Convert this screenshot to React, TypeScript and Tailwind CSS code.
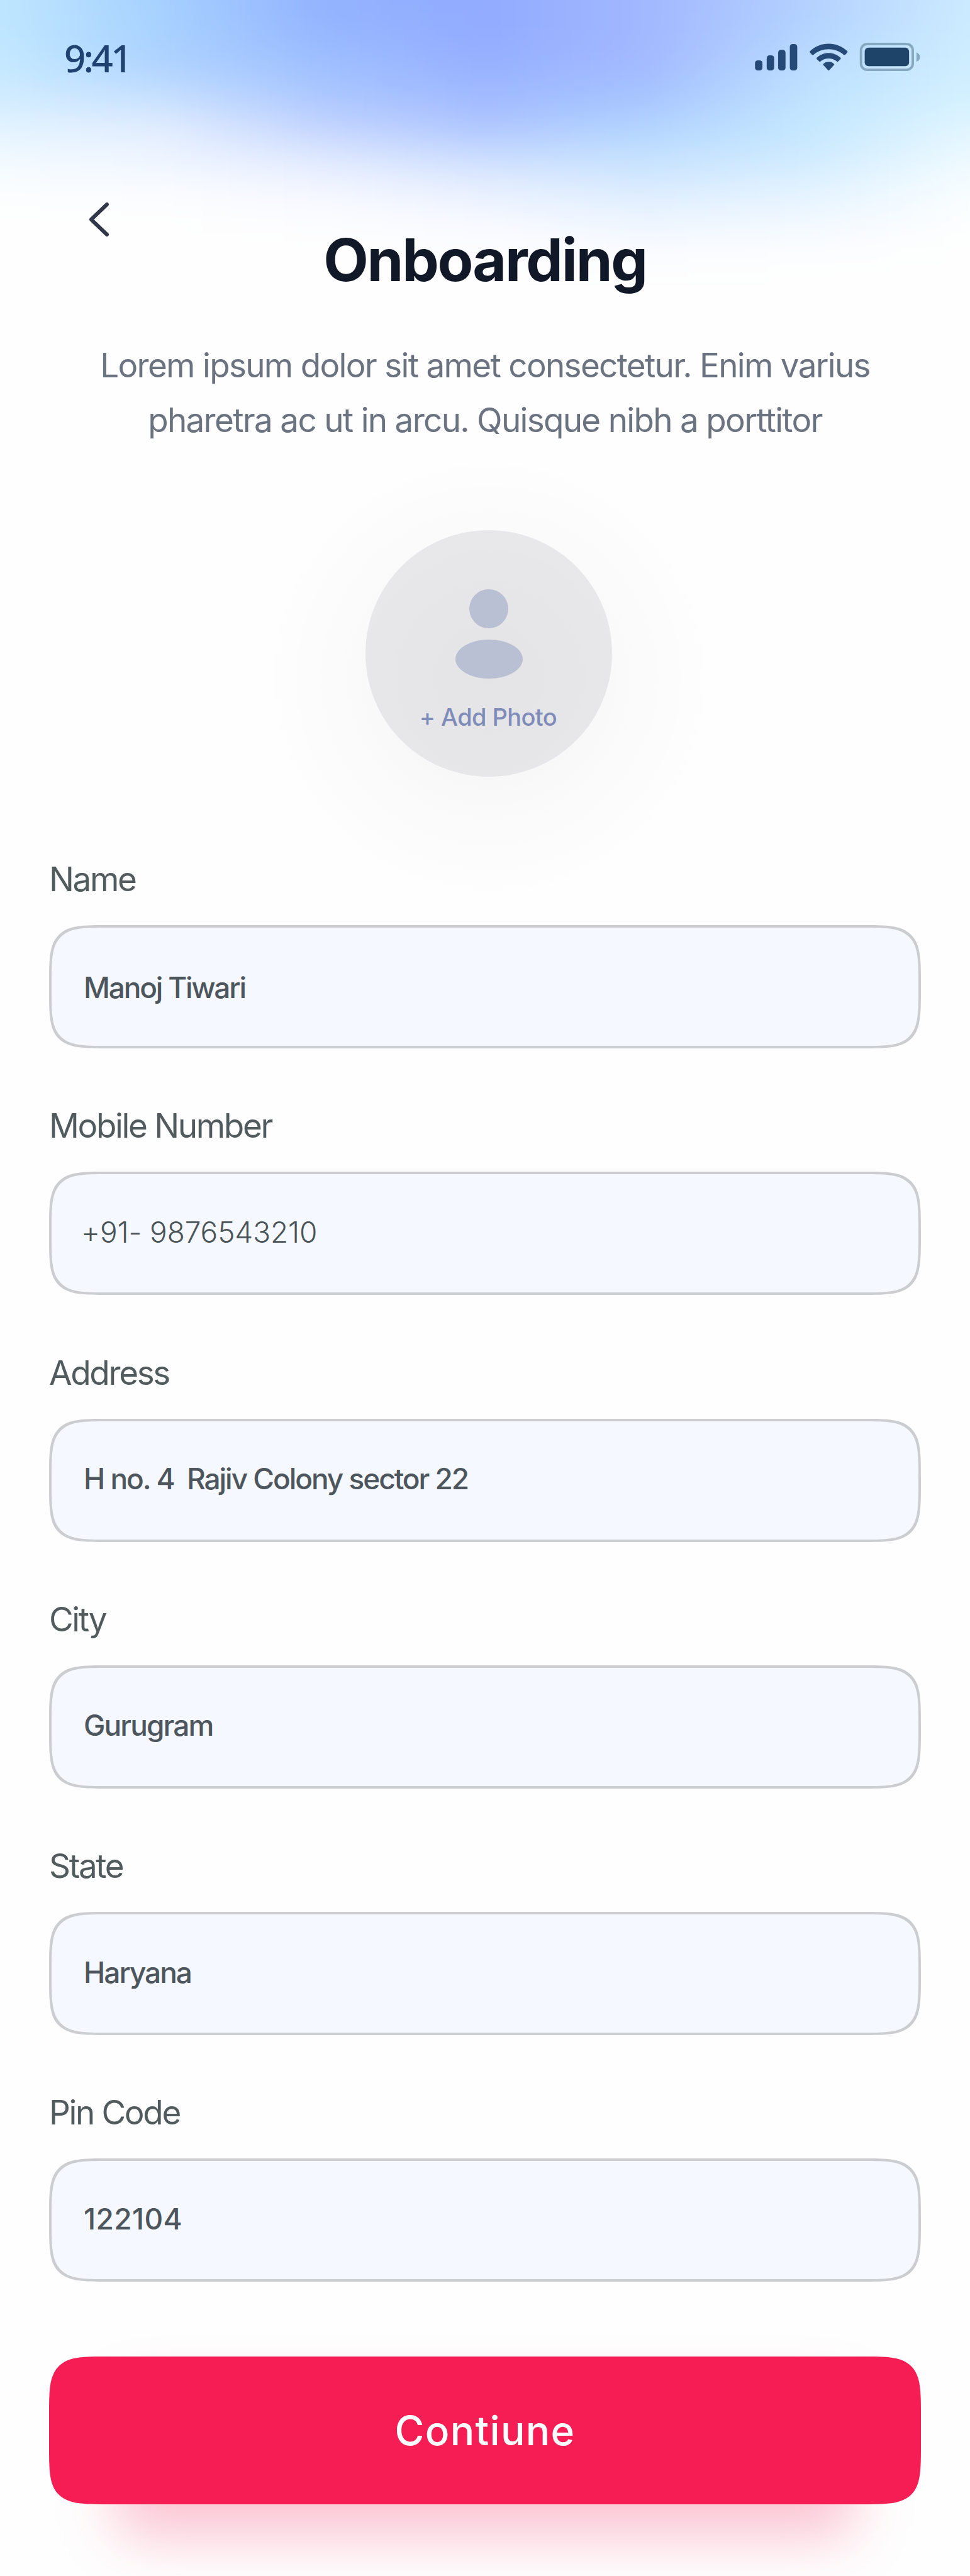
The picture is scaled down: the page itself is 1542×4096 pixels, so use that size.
const fields = [
  { label: "Name", value: "Manoj Tiwari", text: "font-medium tracking-[-2.200px] text-[#4d565c] pt-[2px]" },
  { label: "Mobile Number", value: "+91- 9876543210", text: "font-light tracking-[-0.100px] text-[#4b5457] pb-[4px] -indent-[4px]" },
  { label: "Address", value: "H no. 4  Rajiv Colony sector 22", text: "font-medium tracking-[-2.050px] text-[#4d565c] pb-[4px]" },
  { label: "City", value: "Gurugram", text: "font-medium tracking-[-1.900px] text-[#4d565c] pb-[4px]" },
  { label: "State", value: "Haryana", text: "font-medium tracking-[-2px] text-[#4d565c] pb-[4px]" },
  { label: "Pin Code", value: "122104", text: "font-medium tracking-[0.400px] text-[#4d565c] pb-[4px]" },
];

// Colours of the header mesh, one row per 49px, seven evenly spaced stops per row.
const mesh = [
  "bfe6ff a6d0ff 92b2ff 92abff a2b8ff b4d0ff cceaff",
  "bfe6ff a6d0ff 92b2ff 92abff a2b8ff b4d0ff cceaff",
  "bfe6ff a6d0ff 92b2ff 92abff a2b8ff b4d0ff cceaff",
  "bfe6ff a8d2ff 96b6ff 92abff a2b8ff b4d4ff cdecff",
  "c4e9ff aed2ff 9ebfff 97b0ff a3baff bbdcff cfeeff",
  "ceebff c2deff a9c6ff 9fb8ff a6c2ff c0e2ff d2f0ff",
  "e0f2ff dfebff c0d2ff acc4ff b0d2ff c4e8ff dff5ff",
  "f0f9ff edf4ff dbe6ff c8dbff c2e0ff cdeaff ecf9ff",
  "fafdff f8fbff f2f5ff e4edff d7eaff e0f2ff f7fdff",
  "fefefe fefefe fbfcff f5f8ff ebf4ff eff7ff fcfeff",
  "fefefe fefefe fefefe fdfdff f9fbff fbfdff fefefe",
  "fefefe fefefe fefefe fefefe fefefe fefefe fefefe",
  "fefefe fefefe fefefe fefefe fefefe fefefe fefefe",
];

function Backdrop() {
  return (
    <div className="absolute inset-x-0 top-0 h-[500px] overflow-hidden">
      <div className="absolute left-[-100px] top-[-122px] flex w-[1742px] flex-col blur-[26px]">
        {mesh.map((row, i) => {
          const stops = row.split(" ").map((c, j) => `#${c} ${100 + j * 257}px`).join(",");
          return <div key={i} className="h-[49px]" style={{ backgroundImage: `linear-gradient(90deg,${stops})` }} />;
        })}
      </div>
    </div>
  );
}

function StatusIcons() {
  return (
    <svg className="mt-[28px] h-[48px] w-[272px]" viewBox="0 0 277 49" fill="none">
      <g fill="#264a78">
        <rect x="4" y="29.5" width="12" height="16.5" rx="4.5" />
        <rect x="23" y="21.5" width="12" height="24.5" rx="4.5" />
        <rect x="41.500" y="12.500" width="12" height="33.500" rx="4.500" />
        <rect x="60.500" y="3" width="12" height="43" rx="4.500" />
      </g>
      <g fill="#264a78">
        <path d="M123.500 11.500C132.700 11.500 141.300 14.600 148.100 20.600c.6.600 1.500.600 2.100 0l3.500-3.600c.7-.7.700-1.700 0-2.400C145 6.300 134.500 2.500 123.500 2.500S102 6.300 93.300 14.600c-.7.700-.7 1.700 0 2.400l3.500 3.600c.6.600 1.500.600 2.100 0 6.800-6 15.400-9.100 24.600-9.100Z" />
        <path d="M123.500 26.500c5.200 0 10 1.900 13.400 5 .6.500 1.300.5 1.900 0l4-4c.6-.7.600-1.600-.1-2.200-5.400-5-12.100-7.600-19.200-7.600s-13.800 2.600-19.200 7.600c-.7.600-.7 1.500-.1 2.200l4 4c.6.500 1.300.5 1.900 0 3.400-3.100 8.200-5 13.400-5Z" />
        <path d="M132 37.300c.7-.6.700-1.600 0-2.200-2.400-2-5.400-3.100-8.500-3.100s-6.100 1.100-8.500 3.100c-.7.600-.7 1.600 0 2.200l7.400 8.200c.6.700 1.600.7 2.200 0l7.400-8.200Z" />
      </g>
      <rect x="176" y="3" width="84" height="42" rx="10" stroke="#86a9c1" strokeWidth="4" />
      <rect x="182" y="9" width="72" height="30" rx="6" fill="#1f4469" />
      <path d="M266 16.500c7.800 3 7.800 12.500 0 15.500v-15.500Z" fill="#86a9c1" />
    </svg>
  );
}

export default function App() {
  return (
    <div className="relative h-[4096px] w-[1542px] overflow-hidden bg-[#fefefe] font-['Inter',sans-serif]">
      <Backdrop />
      <div className="relative flex flex-col">
        <header className="flex h-[157px] items-start justify-between pl-[102px] pr-[74px] pt-[39px]">
          <span className="pt-[11px] font-['Noto_Sans',sans-serif] text-[60px] font-medium leading-[84px] tracking-[-3.600px] text-[#1f4270]">9:41</span>
          <StatusIcons />
        </header>

        <section className="flex h-[605px] flex-col items-center">
          <div className="flex h-[200px] w-full pl-[137px] pt-[164px]">
            <svg className="h-[56px] w-[38px] shrink-0" viewBox="0 0 38 56" fill="none" stroke="#32384a" strokeWidth="6" strokeLinecap="round" strokeLinejoin="round">
              <path d="M33 4 8 28l25 24" />
            </svg>
          </div>
          <h1 className="mt-[1px] text-[93px] font-bold leading-[110px] tracking-[-2.250px] text-[#111827]">Onboarding</h1>
          <p className="mt-[70px] whitespace-pre text-center text-[53px] leading-[87px] tracking-[-1.700px] text-[#6b7280]">
            {"Lorem ipsum dolor sit amet consectetur. Enim varius\npharetra ac ut in arcu. Quisque nibh a porttitor"}
          </p>
        </section>

        <div className="relative ml-[581px] mt-[81px] h-[392px] w-[392px]">
          <div className="absolute left-[-164px] top-[-125px] h-[720px] w-[720px] rounded-full bg-[radial-gradient(closest-side,rgba(0,0,0,0.045),rgba(0,0,0,0.028)_40%,rgba(0,0,0,0.015)_60%,rgba(0,0,0,0.006)_80%,rgba(0,0,0,0))]" />
          <div className="relative flex h-full flex-col items-center rounded-full bg-[#d5d6da]/50 pt-[94px]">
            <div className="h-[62px] w-[62px] rounded-full bg-[#bac0d4]" />
            <div className="mt-[18px] h-[62px] w-[107px] rounded-[50%] bg-[#bac0d4]" />
            <span className="mt-[36px] whitespace-nowrap pr-[2px] text-[38px] font-[450] leading-[50px] tracking-[-0.600px] text-[#7f8cba]">+ Add Photo</span>
          </div>
        </div>

        <form className="flex flex-col px-[78px] pt-[121px]">
          {fields.map((f) => (
            <label key={f.label} className="block h-[392.300px]">
              <span className="block h-[115px] text-[53px] leading-[84px] tracking-[-2.350px] text-[#515a5c]">{f.label}</span>
              <span className={"flex h-[196px] items-center whitespace-pre rounded-[97px] border-4 border-[#cccdd0] bg-[#f5f8fe] pl-[51px] text-[46px] [corner-shape:squircle] " + f.text}>
                {f.value}
              </span>
            </label>
          ))}
          <div className="relative mt-[37px]">
            <div className="absolute inset-x-[105px] bottom-[-54px] top-[60px] rounded-[40px] bg-[#f51d53]/25 blur-[44px]" />
            <button type="button" className="relative block h-[235px] w-full rounded-[97px] bg-[#f51d53] pt-[1px] text-[64px] font-medium tracking-[1.300px] text-white [corner-shape:squircle]">
              Contiune
            </button>
          </div>
        </form>
      </div>
    </div>
  );
}
